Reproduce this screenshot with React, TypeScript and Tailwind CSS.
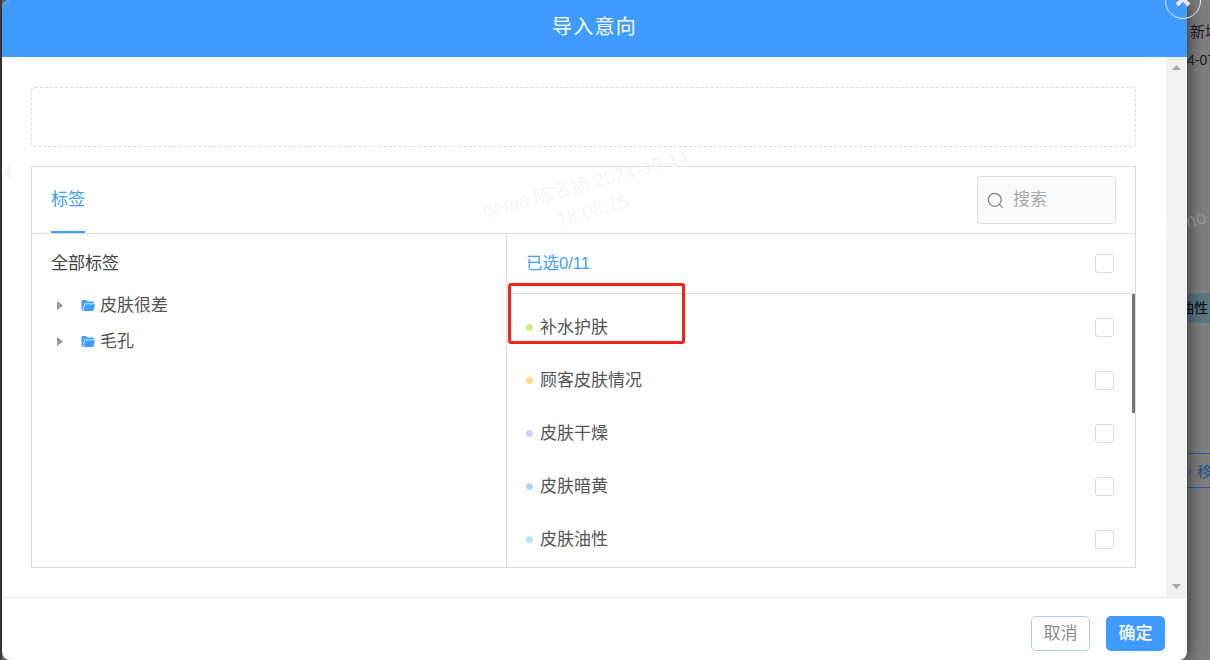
const FONT = "font-['Liberation_Sans','Noto_Sans_CJK_SC',sans-serif]";

function Folder() {
  return (
    <svg width="14" height="13" viewBox="0 0 14 13" className="shrink-0">
      <path d="M0.5 2.2C0.5 1.4 1 1 1.7 1H5l1.4 1.5h5.4c.7 0 1.1.4 1.1 1v1H3.4L1.6 11.6H1.4C.9 11.6.5 11.2.5 10.6Z" fill="#409eff" />
      <path d="M3.9 5.3H13.2c.5 0 .8.4.7.9l-1.3 5c-.1.4-.5.7-.9.7H2.2Z" fill="#409eff" />
    </svg>
  );
}

function TreeRow({ label }: { label: string }) {
  return (
    <div className="flex h-[36px] items-center">
      <svg width="6" height="9" viewBox="0 0 6 9" className="ml-[25px] shrink-0">
        <path d="M0 0L6 4.5L0 9Z" fill="#999999" />
      </svg>
      <div className="ml-[18px]"><Folder /></div>
      <span className="ml-[5px] text-[17px] leading-none text-[#555]">{label}</span>
    </div>
  );
}

function Check() {
  return <div className="h-[19px] w-[19px] shrink-0 rounded-[3px] border border-[#dcdcdc] bg-white" />;
}

function TagRow({ label, dot }: { label: string; dot: string }) {
  return (
    <div className="flex h-[53px] shrink-0 items-center pl-[19px] pr-[21px]">
      <span className={`h-[7px] w-[7px] shrink-0 rounded-full ${dot}`} />
      <span className="ml-[7px] flex-1 text-[17px] leading-none text-[#555]">{label}</span>
      <Check />
    </div>
  );
}

export default function App() {
  return (
    <div className={`relative flex h-[660px] w-[1210px] overflow-hidden bg-[#7f7f7f] ${FONT}`}>
      <div className="w-[2px] shrink-0 bg-[#4a4a4a]" />

      {/* modal */}
      <div className="relative z-10 flex h-[660px] w-[1185px] shrink-0 flex-col overflow-hidden rounded-[8px] bg-white shadow-[0_0_18px_rgba(0,0,0,0.7)]">
        <div className="flex h-[57px] shrink-0 items-center justify-center bg-[#409bff] pb-[3px] text-[20px] tracking-[1.3px] text-white">
          导入意向
        </div>

        <div className="flex h-[540px] shrink-0">
          <div className="min-w-0 flex-1 pl-[29px] pr-[30px] pt-[30px]">
            <div className="h-[60px] rounded-[4px] border border-dashed border-[#dddddd]" />

            <div className="relative mt-[19px] flex h-[402px] flex-col border border-[#dcdcdc]">
              {/* watermark */}
              <div className="pointer-events-none absolute left-[440px] top-[3px] w-[234px] -rotate-[15deg] text-center text-[19px] leading-[27px] text-[#f6f6f6]">
                demo 陈名扬 2024-09-14 18:08:15
              </div>

              <div className="flex h-[67px] shrink-0 items-stretch justify-between border-b border-[#dcdcdc] pl-[19px] pr-[19px]">
                <div className="relative flex w-[34px] items-center whitespace-nowrap text-[17px] text-[#409eff]">
                  标签
                  <span className="absolute bottom-0 left-0 h-[2px] w-full bg-[#409eff]" />
                </div>
                <div className="mt-[9px] flex h-[48px] w-[139px] items-center rounded-[4px] border border-[#e0e0e0] bg-[#fafafa] pl-[9px]">
                  <svg width="17" height="17" viewBox="0 0 17 17" fill="none" stroke="#808080" strokeWidth="1.3">
                    <circle cx="7.8" cy="7.8" r="6.5" />
                    <path d="M12.6 12.6L15.6 15.6" />
                  </svg>
                  <span className="ml-[9px] text-[17px] text-[#aaaaaa]">搜索</span>
                </div>
              </div>

              <div className="flex min-h-0 flex-1">
                <div className="w-[475px] shrink-0 border-r border-[#dcdcdc]">
                  <div className="flex h-[58px] items-center pl-[19px] text-[17px] leading-none text-[#444]">全部标签</div>
                  <div className="mt-[-5px]">
                    <TreeRow label="皮肤很差" />
                    <TreeRow label="毛孔" />
                  </div>
                </div>

                <div className="relative flex min-w-0 flex-1 flex-col">
                  <div className="flex h-[60px] shrink-0 items-center justify-between border-b border-[#dcdcdc] pl-[19px] pr-[21px]">
                    <span className="text-[16.5px] leading-none text-[#409eff]">已选0/11</span>
                    <Check />
                  </div>
                  <div className="relative flex min-h-0 flex-1 flex-col overflow-hidden pt-[7px]">
                    <TagRow label="补水护肤" dot="bg-[#cdeb8f]" />
                    <TagRow label="顾客皮肤情况" dot="bg-[#f8de8e]" />
                    <TagRow label="皮肤干燥" dot="bg-[#d8cdfa]" />
                    <TagRow label="皮肤暗黄" dot="bg-[#bdd0fb]" />
                    <TagRow label="皮肤油性" dot="bg-[#b3e5f5]" />
                    <div className="absolute right-0 top-0 h-[119px] w-[3px] bg-[#777777]" />
                  </div>
                  {/* red annotation */}
                  <div className="pointer-events-none absolute left-[1px] top-[49px] h-[61px] w-[177px] rounded-[3px] border-[3px] border-[#f5231c]" />
                </div>
              </div>
            </div>
          </div>

          <div className="flex w-[21px] shrink-0 flex-col items-center justify-between bg-[#f1f1f1] pb-[8px] pt-[8px]">
            <svg width="9" height="5" viewBox="0 0 9 5"><path d="M4.5 0L9 5H0Z" fill="#a8a8a8" /></svg>
            <svg width="9" height="5" viewBox="0 0 9 5"><path d="M0 0H9L4.5 5Z" fill="#a8a8a8" /></svg>
          </div>
        </div>

        <div className="flex flex-1 items-start justify-end gap-[16px] border-t border-[#e6e6e6] pr-[22px] pt-[18px]">
          <div className="flex h-[35px] w-[59px] items-center justify-center rounded-[5px] border border-[#a9cdf3] bg-white text-[17px] text-[#8c8c8c]">取消</div>
          <div className="flex h-[35px] w-[59px] items-center justify-center rounded-[5px] bg-[#409bff] text-[17px] font-medium text-white">确定</div>
        </div>

        {/* faint watermark piece at the modal's left edge */}
        <div className="pointer-events-none absolute left-[0px] top-[162px] text-[19px] leading-none text-[#f4f4f4]">4</div>
      </div>

      {/* backdrop page showing through on the right */}
      <div className="flex min-w-0 flex-1 flex-col overflow-hidden whitespace-nowrap text-[15px] leading-none text-[#1c1c22]">
        <div className="mt-[24px] h-[16px] pl-[3px]">新增</div>
        <div className="mt-[13px] h-[16px] text-[14px]">4-07</div>
        <div className="mt-[224px] h-[30px] bg-[#5a7680] text-[14px] leading-[30px] text-black">
          <span className="-ml-[7px] inline-block">油性</span>
        </div>
        <div className="mt-[130px] flex h-[35px] items-center border-y border-[#2a5ea8] text-[15px] text-[#23508f]">
          <span className="mt-[2px] h-[5px] w-[4px] shrink-0 rounded-r-full border-r border-b border-[#2a5ea8]" />
          <span className="ml-[6px] mt-[2px]">移</span>
        </div>
      </div>

      {/* watermark crossing the modal edge */}
      <div className="pointer-events-none absolute left-[1159px] top-[213px] z-20 -rotate-[15deg] text-[19px] leading-none text-white/20">demo</div>

      {/* close button over the modal corner */}
      <div className="absolute left-[1165px] top-[-17px] z-20 flex h-[36px] w-[36px] items-center justify-center rounded-full border border-[#e6eef8]">
        <svg width="18" height="18" viewBox="0 0 18 18" className="translate-y-[-2px]">
          <path d="M3 3L15 15M15 3L3 15" stroke="#e8e8e8" strokeWidth="4" />
        </svg>
      </div>
    </div>
  );
}
